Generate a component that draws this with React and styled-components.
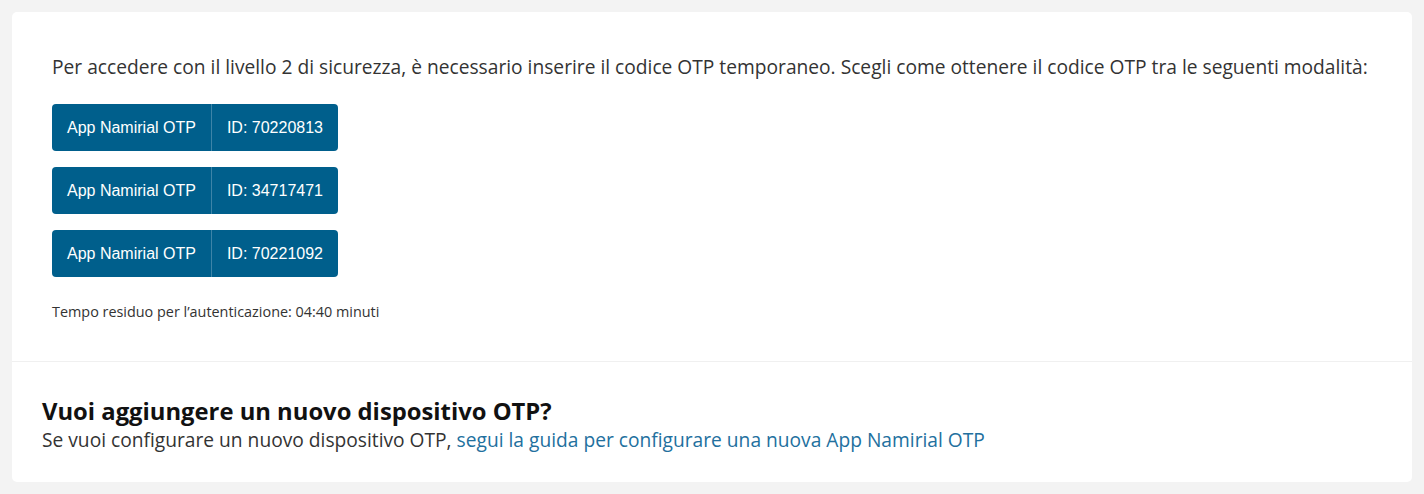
import React from "react";
import styled, { createGlobalStyle } from "styled-components";

const Global = createGlobalStyle`
  html, body { margin: 0; padding: 0; background: #f3f3f3; }
  body { font-family: "Open Sans", "Noto Sans", sans-serif; color: #333; }
`;

const Page = styled.div`
  padding: 12px;
`;

const Card = styled.div`
  background: #fff;
  border-radius: 5px;
  overflow: hidden;
`;

const TopSection = styled.section`
  padding: 42px 40px 39px;
  border-bottom: 1px solid #f0f0f0;
`;

const Intro = styled.p`
  margin: 0 0 24px;
  font-size: 19.2px;
  line-height: 26px;
  color: #333;
`;

const ButtonList = styled.div`
  display: flex;
  flex-direction: column;
  align-items: flex-start;
  gap: 16px;
`;

const OtpButton = styled.button`
  display: flex;
  align-items: stretch;
  height: 47px;
  padding: 0;
  border: none;
  border-radius: 4px;
  background: #005f8c;
  color: #fff;
  font-family: "Liberation Sans", Arial, sans-serif;
  font-size: 16px;
  cursor: pointer;
`;

const ButtonPart = styled.span`
  display: flex;
  align-items: center;
  padding: 0 15px;
  & + & {
    border-left: 1px solid #3d84a8;
  }
`;

const Timer = styled.p`
  margin: 25px 0 0;
  font-size: 14.4px;
  line-height: 20px;
  color: #333;
`;

const BottomSection = styled.section`
  padding: 34px 30px 28px;
`;

const Heading = styled.h2`
  margin: 0;
  font-size: 23.8px;
  line-height: 30px;
  font-weight: 700;
  color: #111;
`;

const Text = styled.p`
  margin: 0;
  font-size: 19.2px;
  line-height: 28px;
  color: #333;
`;

const Link = styled.a`
  color: #22709e;
  text-decoration: none;
`;

const devices = ["70220813", "34717471", "70221092"];

export default function App() {
  return (
    <>
      <Global />
      <Page>
        <Card>
          <TopSection>
            <Intro>
              Per accedere con il livello 2 di sicurezza, è necessario inserire il codice OTP temporaneo. Scegli come ottenere il codice OTP tra le seguenti modalità:
            </Intro>
            <ButtonList>
              {devices.map((id) => (
                <OtpButton key={id}>
                  <ButtonPart>App Namirial OTP</ButtonPart>
                  <ButtonPart>ID: {id}</ButtonPart>
                </OtpButton>
              ))}
            </ButtonList>
            <Timer>Tempo residuo per l’autenticazione: 04:40 minuti</Timer>
          </TopSection>
          <BottomSection>
            <Heading>Vuoi aggiungere un nuovo dispositivo OTP?</Heading>
            <Text>
              Se vuoi configurare un nuovo dispositivo OTP,{" "}
              <Link href="#">segui la guida per configurare una nuova App Namirial OTP</Link>
            </Text>
          </BottomSection>
        </Card>
      </Page>
    </>
  );
}
